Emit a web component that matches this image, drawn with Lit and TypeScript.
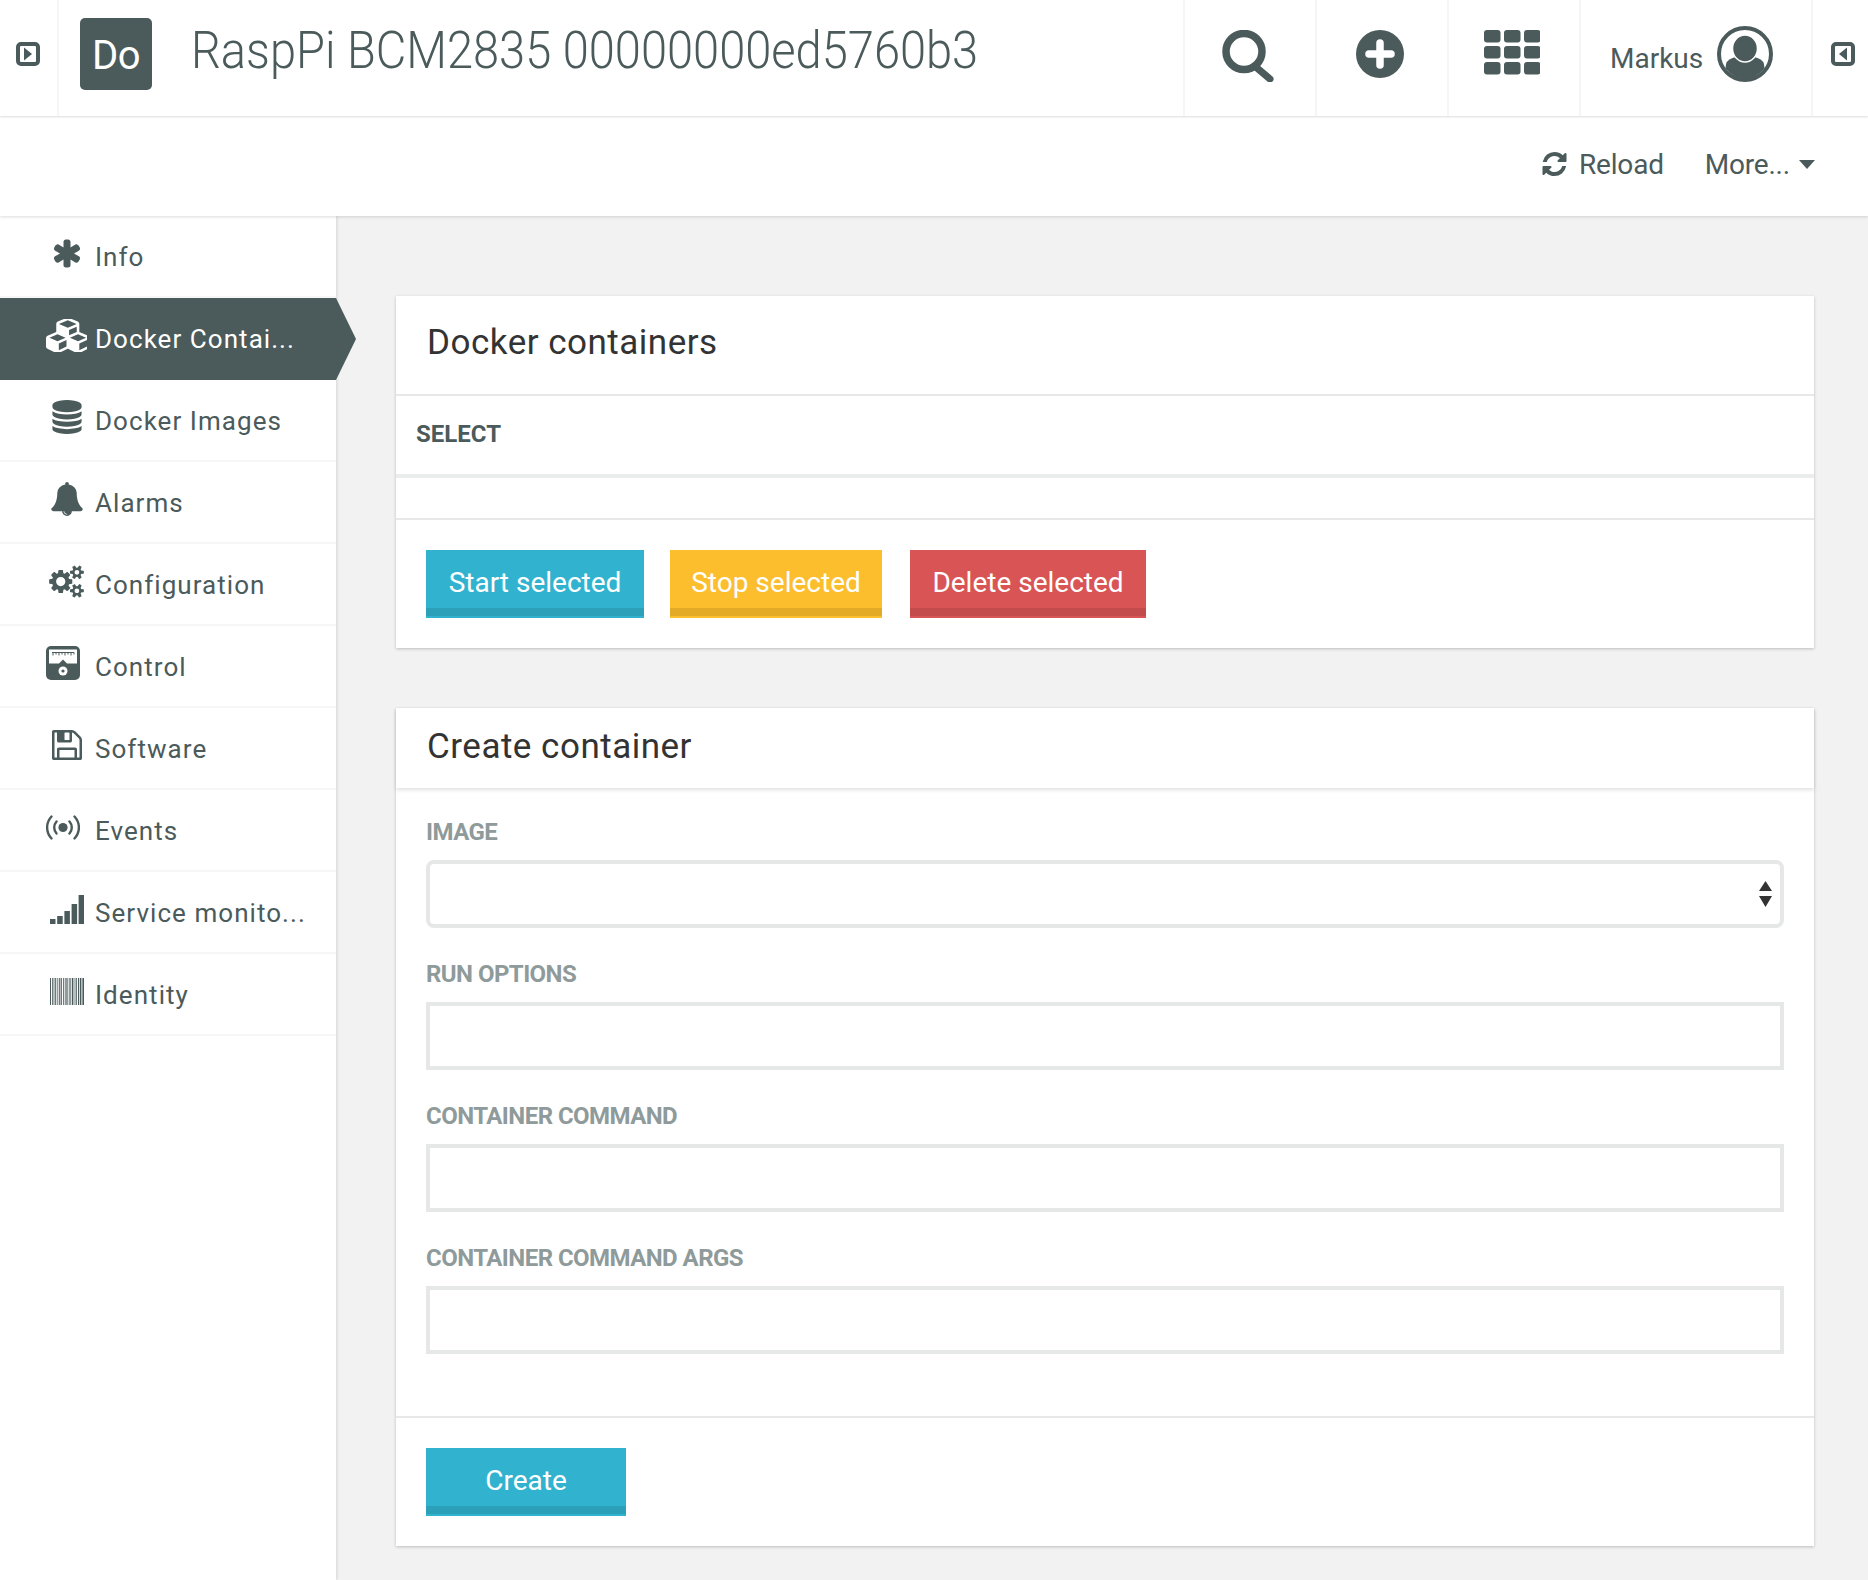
import { LitElement, html, css, svg } from "lit";
import { customElement } from "lit/decorators.js";

const fa = (box: string, d: string, w: number, h: number) => html`<svg width=${w} height=${h} viewBox=${box} fill="currentColor"><path d=${d}></path></svg>`;

const asterisk = fa("130 128 1532 1536", "M1546 1050q46 26 59.5 77.5t-12.5 97.5l-64 110q-26 46-77.5 59.5t-97.5-12.5l-266-153v307q0 52-38 90t-90 38h-128q-52 0-90-38t-38-90v-307l-266 153q-46 26-97.5 12.5t-77.5-59.5l-64-110q-26-46-12.5-97.5t59.5-77.5l266-154-266-154q-46-26-59.5-77.5t12.5-97.5l64-110q26-46 77.5-59.5t97.5 12.5l266 153v-307q0-52 38-90t90-38h128q52 0 90 38t38 90v307l266-153q46-26 97.5-12.5t77.5 59.5l64 110q26 46 12.5 97.5t-59.5 77.5l-266 154z", 28, 29);
const cubes = fa("0 128 2048 1536", "M640 1632l384-192v-314l-384 164v342zm-64-454l404-173-404-173-404 173zm1088 454l384-192v-314l-384 164v342zm-64-454l404-173-404-173-404 173zm-448-293l384-165v-266l-384 164v267zm-64-379l441-189-441-189-441 189zm1088 518v416q0 36-19 67t-52 47l-448 224q-25 14-57 14t-57-14l-448-224q-4-2-7-4-2 2-7 4l-448 224q-25 14-57 14t-57-14l-448-224q-33-16-52-47t-19-67v-416q0-38 21.5-70t56.5-48l434-186v-400q0-38 21.5-70t56.5-48l448-192q23-10 50-10t50 10l448 192q35 16 56.5 48t21.5 70v400l434 186q36 16 57 48t21 70z", 42, 33);
const database = fa("128 0 1536 1792", "M896 768q237 0 443-43t325-127v170q0 69-103 128t-280 93.5-385 34.5-385-34.5-280-93.5-103-128v-170q119 84 325 127t443 43zm0 768q237 0 443-43t325-127v170q0 69-103 128t-280 93.5-385 34.5-385-34.5-280-93.5-103-128v-170q119 84 325 127t443 43zm0-384q237 0 443-43t325-127v170q0 69-103 128t-280 93.5-385 34.5-385-34.5-280-93.5-103-128v-170q119 84 325 127t443 43zm0-1152q208 0 385 34.5t280 93.5 103 128v128q0 69-103 128t-280 93.5-385 34.5-385-34.5-280-93.5-103-128v-128q0-69 103-128t280-93.5 385-34.5z", 30, 34);
const bell = fa("64 0 1664 1792", "M912 1696q0-16-16-16-59 0-101.5-42.5t-42.5-101.5q0-16-16-16t-16 16q0 73 51.5 124.5t124.5 51.5q16 0 16-16zm816-288q0 52-38 90t-90 38h-448q0 106-75 181t-181 75-181-75-75-181h-448q-52 0-90-38t-38-90q50-42 91-88t85-119.5 74.5-158.5 50-206 19.5-260q0-152 117-282.5t307-158.5q-8-19-8-39 0-40 28-68t68-28 68 28 28 68q0 20-8 39 190 28 307 158.5t117 282.5q0 139 19.5 260t50 206 74.5 158.5 85 119.5 91 88z", 32, 34);
const cogs = fa("0 64 2048 1664", "M960 896q0-106-75-181t-181-75-181 75-75 181 75 181 181 75 181-75 75-181zm768 512q0-52-38-90t-90-38-90 38-38 90q0 53 37.5 90.5t90.5 37.5 90.5-37.5 37.5-90.5zm0-1024q0-52-38-90t-90-38-90 38-38 90q0 53 37.5 90.5t90.5 37.5 90.5-37.5 37.5-90.5zm-384 421v185q0 10-7 19.5t-16 10.5l-155 24q-11 35-32 76 34 48 90 115 7 11 7 20 0 12-7 19-23 30-82.5 89.5t-78.5 59.5q-11 0-21-7l-115-90q-37 19-77 31-11 108-23 155-7 24-30 24h-186q-11 0-20-7.5t-10-17.5l-23-153q-34-10-75-31l-118 89q-7 7-20 7-11 0-21-8-144-133-144-160 0-9 7-19 10-14 41-53t47-61q-23-44-35-82l-152-24q-10-1-17-9.5t-7-19.5v-185q0-10 7-19.5t16-10.5l155-24q11-35 32-76-34-48-90-115-7-11-7-20 0-12 7-20 22-30 82-89t79-59q11 0 21 7l115 90q34-18 77-32 11-108 23-154 7-24 30-24h186q11 0 20 7.5t10 17.5l23 153q34 10 75 31l118-89q8-7 20-7 11 0 21 8 144 133 144 160 0 8-7 19-12 16-42 54t-45 60q23 48 34 82l152 23q10 2 17 10.5t7 19.5zm640 533v140q0 16-149 31-12 27-30 52 51 113 51 138 0 4-4 7-122 71-124 71-8 0-46-47t-52-68q-20 2-30 2t-30-2q-14 21-52 68t-46 47q-2 0-124-71-4-3-4-7 0-25 51-138-18-25-30-52-149-15-149-31v-140q0-16 149-31 13-29 30-52-51-113-51-138 0-4 4-7 4-2 35-20t59-34 30-16q8 0 46 46.5t52 67.5q20-2 30-2t30 2q51-71 92-112l6-2q4 0 124 70 4 3 4 7 0 25-51 138 17 23 30 52 149 15 149 31zm0-1024v140q0 16-149 31-12 27-30 52 51 113 51 138 0 4-4 7-122 71-124 71-8 0-46-47t-52-68q-20 2-30 2t-30-2q-14 21-52 68t-46 47q-2 0-124-71-4-3-4-7 0-25 51-138-18-25-30-52-149-15-149-31v-140q0-16 149-31 13-29 30-52-51-113-51-138 0-4 4-7 4-2 35-20t59-34 30-16q8 0 46 46.5t52 67.5q20-2 30-2t30 2q51-71 92-112l6-2q4 0 124 70 4 3 4 7 0 25-51 138 17 23 30 52 149 15 149 31z", 37, 33);
const floppy = fa("128 128 1536 1536", "M512 1536h768v-384h-768v384zm896 0h128v-896q0-14-10-38.5t-20-34.5l-281-281q-10-10-34-20t-39-10v416q0 40-28 68t-68 28h-576q-40 0-68-28t-28-68v-416h-128v1280h128v-416q0-40 28-68t68-28h832q40 0 68 28t28 68v416zm-384-928v-320q0-13-9.5-22.5t-22.5-9.5h-192q-13 0-22.5 9.5t-9.5 22.5v320q0 13 9.5 22.5t22.5 9.5h192q13 0 22.5-9.5t9.5-22.5zm640 32v928q0 40-28 68t-68 28h-1344q-40 0-68-28t-28-68v-1344q0-40 28-68t68-28h928q40 0 88 20t76 48l280 280q28 28 48 76t20 88z", 30, 30);
const refresh = fa("128 128 1536 1536", "M1639 1056q0 5-1 7-64 268-268 434.5t-478 166.5q-146 0-282.5-55t-243.5-157l-129 129q-19 19-45 19t-45-19-19-45v-448q0-26 19-45t45-19h448q26 0 45 19t19 45-19 45l-137 137q71 66 161 102t187 36q134 0 250-65t186-179q11-17 53-117 8-23 30-23h192q13 0 22.5 9.5t9.5 22.5zm25-800v448q0 26-19 45t-45 19h-448q-26 0-45-19t-19-45 19-45l138-138q-148-137-349-137-134 0-250 65t-186 179q-11 17-53 117-8 23-30 23h-199q-13 0-22.5-9.5t-9.5-22.5v-7q65-268 270-434.5t480-166.5q146 0 284 55.5t245 156.5l130-129q19-19 45-19t45 19 19 45z", 25, 24);

const control = html`<svg width="34" height="34" viewBox="0 0 34 34"><rect width="34" height="34" rx="5" fill="currentColor"></rect><path d="M3 3.500h28v14h-10l-4-4-4 4H3z" fill="#fff"></path><path d="M6 6.500h22M7 6.500v3M10 6.500v2M13 6.500v3M16 6.500v2M19 6.500v3M22 6.500v2M25 6.500v3M28 6.500v2" stroke="currentColor" stroke-width="1" fill="none"></path><circle cx="17" cy="25" r="4.500" fill="#fff"></circle><circle cx="17" cy="25" r="1.600" fill="currentColor"></circle></svg>`;
const events = html`<svg width="34" height="25" viewBox="0 0 34 25" fill="none" stroke="currentColor" stroke-width="2.400" stroke-linecap="round"><circle cx="17" cy="12.500" r="4.600" fill="currentColor" stroke="none"></circle><path d="M10.500 6.500a9 9 0 0 0 0 12M23.500 6.500a9 9 0 0 1 0 12M5.500 1.500a16 16 0 0 0 0 22M28.500 1.500a16 16 0 0 1 0 22"></path></svg>`;
const signal = html`<svg width="34" height="29" viewBox="0 0 34 29" fill="currentColor"><rect x="0" y="24" width="5.500" height="5"></rect><rect x="7.200" y="21" width="5.500" height="8"></rect><rect x="14.400" y="16" width="5.500" height="13"></rect><rect x="21.600" y="9" width="5.500" height="20"></rect><rect x="28.600" y="0" width="5.400" height="29"></rect></svg>`;
const bars: [number, number][] = [[0, 1], [2, 0.8], [3.6, 0.8], [5.2, 1], [7.4, 0.8], [9, 0.8], [10.6, 1.2], [13, 0.8], [14.8, 0.8], [16.4, 1.2], [18.8, 0.8], [20.4, 0.8], [22, 1.4], [24.6, 0.8], [26.2, 0.8], [28, 1.2], [30, 1.4], [32.400, 1.600]];
const barcode = html`<svg width="34" height="27" viewBox="0 0 34 27" fill="currentColor">${bars.map(([x, w]) => svg`<rect x=${x} y="0" width=${w} height="27"></rect>`)}</svg>`;

const search = html`<svg width="52" height="52" viewBox="0 0 52 52" fill="none" stroke="currentColor"><circle cx="22" cy="21.500" r="18" stroke-width="7.500"></circle><path d="M35 38l13 11" stroke-width="7" stroke-linecap="round"></path></svg>`;
const plus = html`<svg width="48" height="48" viewBox="0 0 48 48"><circle cx="24" cy="24" r="24" fill="currentColor"></circle><path d="M24 13v22M13 24h22" stroke="#fff" stroke-width="7.500" stroke-linecap="round"></path></svg>`;
const gridCells = [0, 1, 2].flatMap((r) => [0, 1, 2].map((c) => svg`<rect x=${c * 20} y=${r * 16} width="16.500" height="12.500" rx="3"></rect>`));
const grid = html`<svg width="56" height="45" viewBox="0 0 56 45" fill="currentColor">${gridCells}</svg>`;
const avatar = html`<svg width="56" height="56" viewBox="0 0 56 56"><circle cx="28" cy="28" r="26" fill="none" stroke="currentColor" stroke-width="4"></circle><path d="M8.500 42q0-8 7-10l7-2h11l7 2q7 2 7 10a23.500 23.500 0 0 1-39 0z" fill="currentColor"></path><ellipse cx="28" cy="22.500" rx="12.500" ry="13.500" fill="currentColor" stroke="#fff" stroke-width="1.500"></ellipse></svg>`;
const toggleLeft = html`<svg width="24" height="24" viewBox="0 0 24 24"><rect x="2" y="2" width="20" height="20" rx="3" fill="none" stroke="currentColor" stroke-width="4"></rect><path d="M8 5.500l8 6.500-8 6.500z" fill="currentColor"></path></svg>`;
const toggleRight = html`<svg width="24" height="24" viewBox="0 0 24 24"><rect x="2" y="2" width="20" height="20" rx="3" fill="none" stroke="currentColor" stroke-width="4"></rect><path d="M16 5.500l-8 6.500 8 6.500z" fill="currentColor"></path></svg>`;

const navItems = [
  { label: "Info", icon: asterisk },
  { label: "Docker Contai...", icon: cubes, active: true },
  { label: "Docker Images", icon: database },
  { label: "Alarms", icon: bell },
  { label: "Configuration", icon: cogs },
  { label: "Control", icon: control, shift: true },
  { label: "Software", icon: floppy },
  { label: "Events", icon: events, shift: true },
  { label: "Service monito...", icon: signal },
  { label: "Identity", icon: barcode },
];

@customElement("app-root")
export class AppRoot extends LitElement {
  static styles = css`
    :host {
      display: block;
      height: 1580px;
      overflow: hidden;
      background: #f2f2f2;
      color: #4b5a5a;
      font-family: Roboto, "Liberation Sans", sans-serif;
    }
    svg { display: block; }

    .top {
      position: relative;
      z-index: 3;
      display: flex;
      height: 116px;
      background: #fff;
      box-shadow: 0 1px 2px rgba(0, 0, 0, 0.14);
    }
    .toggle {
      flex: none;
      width: 59px;
      padding-top: 42px;
      padding-left: 16px;
      box-sizing: border-box;
      border-right: 2px solid #f6f6f6;
    }
    .toggle.right {
      width: 57px;
      padding-left: 18px;
      border-right: 0;
      border-left: 2px solid #f6f6f6;
    }
    .tile {
      flex: none;
      width: 72px;
      height: 72px;
      margin: 18px 0 0 21px;
      border-radius: 5px;
      background: #4b5a5a;
      color: #fff;
      font-size: 40px;
      line-height: 76px;
      text-align: center;
      letter-spacing: -0.5px;
    }
    .title {
      flex: 1;
      margin: 18px 0 0 39px;
      font-size: 52px;
      font-weight: 300;
      line-height: 66px;
      white-space: nowrap;
      transform: scaleX(0.904);
      transform-origin: left center;
    }
    .cell {
      flex: none;
      width: 132px;
      box-sizing: border-box;
      display: flex;
      justify-content: center;
      padding: 30px 4px 0 0;
      border-left: 2px solid #f6f6f6;
    }
    .user {
      flex: none;
      width: 232px;
      box-sizing: border-box;
      display: flex;
      padding: 26px 0 0 29px;
      gap: 14px;
      border-left: 2px solid #f6f6f6;
      font-size: 28px;
      line-height: 40px;
    }
    .user span { margin-top: 13px; }

    .sub {
      position: relative;
      z-index: 2;
      display: flex;
      justify-content: flex-end;
      align-items: center;
      gap: 41px;
      height: 100px;
      padding: 0 53px 4px 0;
      box-sizing: border-box;
      background: #fff;
      box-shadow: 0 1px 3px rgba(0, 0, 0, 0.14);
      font-size: 28px;
      letter-spacing: -0.2px;
    }
    .action { display: flex; align-items: center; gap: 12px; }
    .action.more { gap: 9px; }
    .caret {
      width: 0;
      height: 0;
      border: 8px solid transparent;
      border-top: 9px solid #4b5a5a;
      border-bottom: 0;
    }

    .body { display: flex; }
    aside {
      position: relative;
      z-index: 1;
      flex: none;
      width: 336px;
      height: 1364px;
      background: #fff;
      box-shadow: 1px 0 3px rgba(0, 0, 0, 0.12);
    }
    .item {
      position: relative;
      display: flex;
      align-items: center;
      height: 82px;
      box-sizing: border-box;
      border-bottom: 2px solid #f6f6f6;
      font-size: 26px;
      letter-spacing: 1.05px;
    }
    .item.active { background: #4b5a5a; color: #fff; border-bottom-color: #4b5a5a; }
    .item.active::after {
      content: "";
      position: absolute;
      left: 100%;
      top: 0;
      bottom: -2px;
      width: 20px;
      background: #4b5a5a;
      clip-path: polygon(0 0, 100% 50%, 0 100%);
    }
    .icon {
      flex: none;
      width: 95px;
      display: flex;
      justify-content: flex-end;
      margin-top: -6px;
    }
    .icon > span {
      width: 41px;
      margin-right: 8px;
      display: flex;
      justify-content: center;
    }
    .icon.shift > span { margin-right: 12px; }
    .label { margin-top: 2px; white-space: nowrap; }

    main { flex: 1; padding: 80px 54px 0 60px; }
    .card {
      background: #fff;
      box-shadow: 0 1px 3px rgba(0, 0, 0, 0.22);
      margin-bottom: 60px;
    }
    .card-head {
      height: 100px;
      box-sizing: border-box;
      padding: 0 0 6px 31px;
      display: flex;
      align-items: center;
      border-bottom: 2px solid #e8e8e8;
      color: #333;
      font-size: 35px;
      letter-spacing: 0.5px;
    }
    .card-head.flat {
      height: 80px;
      padding-bottom: 4px;
      border-bottom: 0;
      box-shadow: 0 2px 4px rgba(0, 0, 0, 0.12);
    }
    .th {
      height: 78px;
      display: flex;
      align-items: center;
      padding: 0 0 2px 20px;
      box-sizing: border-box;
      height: 82px;
      font-size: 24px;
      font-weight: 700;
      border-bottom: 4px solid #ebecec;
    }
    .empty { height: 40px; border-bottom: 2px solid #e8e8e8; }
    .actions { display: flex; padding: 30px; }
    .btn {
      flex: none;
      height: 68px;
      box-sizing: border-box;
      padding: 0 0 4px;
      border: 0;
      color: #fff;
      font: 400 28px Roboto, "Liberation Sans", sans-serif;
      text-align: center;
    }
    .btn.info { background: #31b3cf; box-shadow: inset 0 -2px 0 #31b3cf, inset 0 -10px 0 #2ca0b9; }
    .btn.warn { background: #fdbe2d; box-shadow: inset 0 -2px 0 #fdbe2d, inset 0 -10px 0 #e3aa28; }
    .btn.danger { background: #d95454; box-shadow: inset 0 -2px 0 #d95454, inset 0 -10px 0 #c34b4b; }

    .form { padding: 28px 30px 32px; }
    .group { margin-bottom: 30px; }
    .group label {
      display: block;
      height: 30px;
      margin-bottom: 14px;
      color: #8f9a9a;
      font-size: 24px;
      font-weight: 700;
      line-height: 32px;
      letter-spacing: -0.55px;
    }
    .field {
      display: block;
      width: 100%;
      height: 68px;
      box-sizing: border-box;
      border: 4px solid #e6e8e8;
      background: #fff;
      padding: 0 8px;
      outline: none;
    }
    .picker {
      display: flex;
      align-items: center;
      justify-content: flex-end;
      padding-right: 8px;
      border-radius: 8px;
      color: #333;
    }
    .foot { border-top: 2px solid #e8e8e8; padding: 30px; }
  `;

  render() {
    return html`
      <header class="top">
        <div class="toggle">${toggleLeft}</div>
        <div class="tile">Do</div>
        <div class="title">RaspPi BCM2835 00000000ed5760b3</div>
        <div class="cell">${search}</div>
        <div class="cell">${plus}</div>
        <div class="cell">${grid}</div>
        <div class="user"><span>Markus</span>${avatar}</div>
        <div class="toggle right">${toggleRight}</div>
      </header>
      <div class="sub">
        <div class="action">${refresh}<span>Reload</span></div>
        <div class="action more">More...<i class="caret"></i></div>
      </div>
      <div class="body">
        <aside>
          ${navItems.map((n) => html`
            <div class="item ${n.active ? "active" : ""}">
              <div class="icon ${n.shift ? "shift" : ""}"><span>${n.icon}</span></div>
              <div class="label">${n.label}</div>
            </div>
          `)}
        </aside>
        <main>
          <section class="card">
            <div class="card-head">Docker containers</div>
            <div class="th">SELECT</div>
            <div class="empty"></div>
            <div class="actions">
              <button class="btn info" style="width:218px;margin-right:26px">Start selected</button>
              <button class="btn warn" style="width:212px;margin-right:28px">Stop selected</button>
              <button class="btn danger" style="width:236px">Delete selected</button>
            </div>
          </section>
          <section class="card">
            <div class="card-head flat">Create container</div>
            <div class="form">
              <div class="group">
                <label>IMAGE</label>
                <div class="field picker">
                  <svg width="13" height="26" viewBox="0 0 13 26" fill="currentColor"><path d="M6.500 0L13 10H0zM0 15h13L6.500 26z"></path></svg>
                </div>
              </div>
              <div class="group"><label>RUN OPTIONS</label><input class="field" /></div>
              <div class="group"><label>CONTAINER COMMAND</label><input class="field" /></div>
              <div class="group"><label>CONTAINER COMMAND ARGS</label><input class="field" /></div>
            </div>
            <div class="foot">
              <button class="btn info" style="width:200px">Create</button>
            </div>
          </section>
        </main>
      </div>
    `;
  }
}
